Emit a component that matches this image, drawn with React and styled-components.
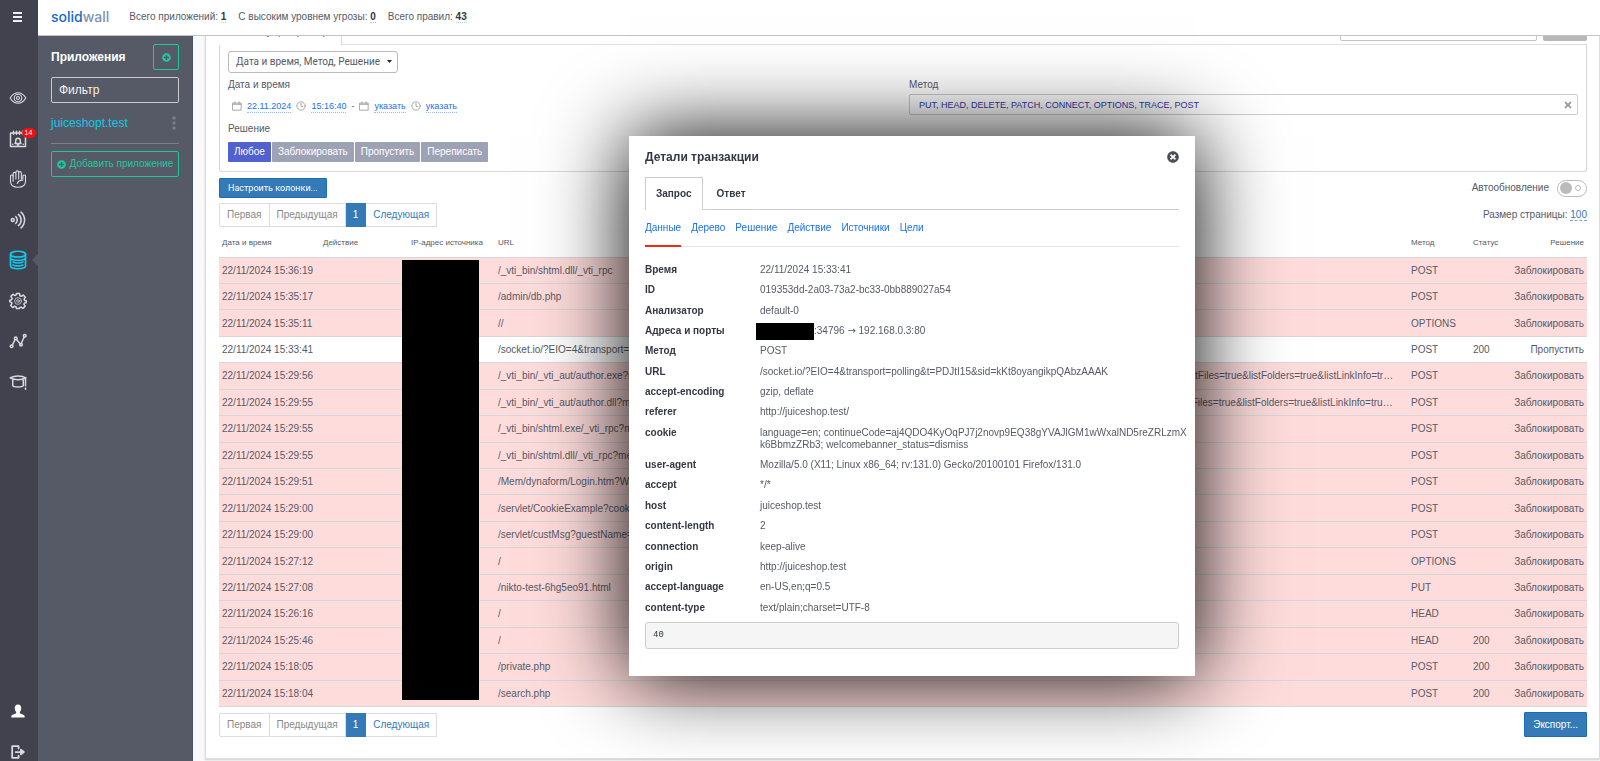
import React,{ useState } from 'react';
import styled,{ createGlobalStyle } from 'styled-components';
import { FaPlusCircle, FaTimesCircle, FaTimes } from 'react-icons/fa';

const CssReset = createGlobalStyle`
    *, *::before, *::after {
        box-sizing:border-box;
    }
    body {
        margin:0;
        background:#f9f9f9;
        color:#555a66;
        font-family:"Liberation Sans", Arial, sans-serif;
        font-size:10px;
        line-height:12px;
    }
    button, input, select {
        font:inherit;
        color:inherit;
        margin:0;
    }
    button {
        cursor:pointer;
    }
    a {
        color:#1a6ff5;
        text-decoration:none;
    }
    svg {
        display:block;
        flex:none;
    }
`
const Shell = styled.div`
    display:flex;
    height:100vh;
    overflow:hidden;
`
const Rail = styled.nav`
    position:relative;
    display:flex;
    flex-direction:column;
    align-items:center;
    flex:none;
    width:38px;
    padding:11px 3px 0 0;
    background:#42424f;
    color:#d9d9de;
`
const RailButton = styled.button`
    position:relative;
    display:flex;
    align-items:center;
    justify-content:center;
    width:24px;
    height:${props => props.$small ? '12px' : '24px'};
    padding:0;
    border:0;
    background:none;
    color:${props => props.$active ? '#12c8e8' : '#d9d9de'};
`
const RailGroup = styled.div`
    display:flex;
    flex-direction:column;
    justify-content:space-between;
    height:${props => props.$height};
    margin-top:${props => props.$bottom ? 'auto' : '63px'};
    margin-bottom:${props => props.$bottom ? '-3px' : '0'};
`
const Badge = styled.span`
    position:absolute;
    top:1px;
    left:16px;
    width:14px;
    height:10px;
    border-radius:5px;
    background:#f01010;
    color:#fff;
    font-size:7px;
    line-height:10px;
    text-align:center;
`
const Notch = styled.span`
    position:absolute;
    top:5px;
    right:-9px;
    border:7px solid transparent;
    border-left:0;
    border-right-color:#555a66;
`
const Page = styled.div`
    display:flex;
    flex-direction:column;
    flex:1;
    min-width:0;
`
const TopBar = styled.header`
    position:relative;
    z-index:1;
    display:flex;
    align-items:center;
    gap:12px;
    flex:none;
    height:36px;
    padding:0 13px 2px;
    background:#fff;
    border-bottom:1px solid #c4c4c4;
`
const Logo = styled.a`
    margin-right:8px;
    color:#1268d3;
    font-family:Inter, sans-serif;
    font-size:14px;
    font-weight:500;
    line-height:16px;
    span {
        color:#7f93ad;
    }
`
const Stat = styled.span`
    b {
        color:#333844;
        border-bottom:1px dotted #b9c8ee;
    }
`
const Columns = styled.div`
    display:flex;
    flex:1;
    min-height:0;
`
const Sidebar = styled.aside`
    flex:none;
    width:155px;
    padding:8px 13px 0 13px;
    background:#555a66;
    border-right:1px solid #4a5269;
`
const SideHead = styled.div`
    display:flex;
    align-items:center;
    justify-content:space-between;
    margin-bottom:7px;
    h2 {
        margin:0;
        color:#fff;
        font-size:12px;
        line-height:16px;
    }
`
const OutlineButton = styled.button`
    display:flex;
    align-items:center;
    justify-content:center;
    gap:4px;
    width:${props => props.$square ? '26px' : '100%'};
    height:26px;
    padding:0;
    border:1px solid #1fc9a0;
    border-radius:2px;
    background:none;
    color:#1fc9a0;
    white-space:nowrap;
`
const FilterInput = styled.input`
    display:block;
    width:100%;
    height:26px;
    padding:0 7px;
    border:1px solid #c9cbd1;
    border-radius:2px;
    background:none;
    color:#fff;
    font-size:12px;
    &::placeholder {
        color:#f2f2f2;
        opacity:1;
    }
`
const AppRow = styled.div`
    display:flex;
    align-items:center;
    justify-content:space-between;
    height:41px;
    margin-bottom:7px;
    padding:0 3px 0 0;
    border-bottom:1px solid #7b808c;
    a {
        color:#12c8e8;
        font-size:12px;
    }
    button {
        padding:0;
        border:0;
        background:none;
        color:#7b808c;
    }
`
const Content = styled.main`
    flex:1;
    min-width:0;
    padding:0 0 2px 12px;
`
const Card = styled.section`
    height:100%;
    padding:0 12px 0 13px;
    background:#fff;
    border:1px solid #dcdcdc;
    border-top:0;
    box-shadow:0 1px 2px #ccc;
`
/* the page is scrolled, only the lower edge of the strip shows under the bar */
const TabStrip = styled.div`
    display:flex;
    align-items:flex-end;
    height:9px;
    overflow:hidden;
`
const StripTab = styled.a`
    width:123px;
    height:30px;
    padding:11px 0 0 32px;
    border-right:1px solid #d8d8d8;
    color:#555a66;
`
const StripSearch = styled.label`
    display:flex;
    align-items:flex-end;
    gap:6px;
    flex:1;
    height:30px;
    justify-content:flex-end;
    border-bottom:1px solid #e0e0e0;
    padding-bottom:3px;
    span {
        margin:0 8px 4px 0;
    }
    input {
        width:197px;
        height:22px;
        border:1px solid #c4c4c4;
        border-radius:2px;
    }
    button {
        width:44px;
        height:22px;
        border:0;
        border-radius:2px;
        background:#b8b8b8;
    }
`
const FilterPanel = styled.div`
    padding:6px 8px 9px;
    border:1px solid #d8d8d8;
    border-top:0;
    border-radius:0 0 3px 3px;
`
const PickWrap = styled.div`
    position:relative;
    width:170px;
    svg {
        position:absolute;
        top:9px;
        right:6px;
    }
`
const Pick = styled.select`
    display:block;
    width:100%;
    height:22px;
    padding:0 7px;
    border:1px solid #bbb;
    border-radius:3px;
    background:#fff;
    appearance:none;
    font-family:Roboto, sans-serif;
    font-size:10px;
`
const FilterGrid = styled.div`
    display:grid;
    grid-template-columns:1fr 1fr;
    gap:12px;
    padding-top:5px;
`
const FieldLabel = styled.div`
    line-height:14px;
    margin-bottom:2px;
`
const DateRow = styled.div`
    display:flex;
    align-items:center;
    gap:5px;
    height:20px;
    margin:4px 0 6px;
    padding-left:4px;
    font-size:9px;
    svg {
        color:#999;
    }
    a {
        border-bottom:1px dotted #9ab8f5;
    }
`
const ButtonGroup = styled.div`
    display:flex;
    gap:1px;
    margin-top:6px;
`
const GroupButton = styled.button`
    height:20px;
    padding:0 6px;
    border:0;
    border-radius:1px;
    background:${props => props.$active ? '#5161cf' : '#9ea2b5'};
    color:#fff;
`
const TagBox = styled.div`
    display:flex;
    align-items:center;
    height:21px;
    padding:0 4px 0 9px;
    border:1px solid #ccc;
    border-radius:2px;
    input {
        flex:1;
        min-width:0;
        padding:0;
        border:0;
        outline:0;
        background:none;
        color:#3238a8;
        font-size:9px;
    }
    button {
        padding:0;
        border:0;
        background:none;
        color:#999;
    }
`
const Line = styled.div`
    display:flex;
    align-items:center;
    justify-content:space-between;
    padding-top:${props => props.$top};
`
const BlueButton = styled.button`
    height:${props => props.$tall ? '25px' : '20px'};
    padding:0 8px;
    border:1px solid #1a6cb4;
    border-radius:1px;
    background:#337ab7;
    color:#fff;
    ${props => props.$narrow && 'font-family:Roboto, sans-serif; font-size:9px;'}
`
const Toggle = styled.label`
    display:flex;
    align-items:center;
    gap:8px;
    input {
        display:grid;
        grid-template-columns:12px 12px;
        align-items:center;
        justify-items:center;
        width:30px;
        height:17px;
        margin:0;
        padding:0 2px;
        appearance:none;
        border:1px solid #bbb;
        border-radius:9px;
        background:#fff;
    }
    input::before {
        content:'';
        width:12px;
        height:12px;
        border-radius:50%;
        background:#bbb;
    }
    input::after {
        content:'';
        width:6px;
        height:6px;
        border:1px solid #bbb;
        border-radius:50%;
    }
`
const PageSize = styled.span`
    a {
        color:#337ab7;
        border-bottom:1px dashed #7aa5d0;
    }
`
const PagerBox = styled.div`
    display:flex;
    button {
        height:24px;
        padding:0 7px;
        border:1px solid #ddd;
        border-left:0;
        background:#fff;
        color:#337ab7;
    }
    button:first-child {
        border-left:1px solid #ddd;
        border-radius:2px 0 0 2px;
    }
    button:disabled {
        color:#888;
    }
    button.current {
        border-color:#337ab7;
        background:#337ab7;
        color:#fff;
    }
`
const TableWrap = styled.div`
    position:relative;
`
const Table = styled.table`
    width:100%;
    height:480px;
    table-layout:fixed;
    border-collapse:collapse;
    th, td {
        padding:1px 3px 0;
        overflow:hidden;
        border-bottom:1px solid #d5d8d8;
        text-align:left;
        text-overflow:ellipsis;
        white-space:nowrap;
    }
    td:nth-child(4) {
        padding-right:12px;
    }
    th {
        height:30px;
        padding-top:3px;
        font-size:8px;
        font-weight:normal;
    }
    th:last-child, td:last-child {
        text-align:right;
    }
    col.date {
        width:101px;
    }
    col.action {
        width:88px;
    }
    col.ip {
        width:87px;
    }
    col.method {
        width:62px;
    }
    col.status {
        width:36px;
    }
    col.decision {
        width:81px;
    }
`
const Tr = styled.tr`
    background:${props => props.$blocked ? '#ffdcdc' : '#fff'};
`
const Redacted = styled.div`
    position:absolute;
    top:33px;
    bottom:7px;
    left:183px;
    width:77px;
    background:#000;
`
const Modal = styled.div`
    position:fixed;
    z-index:2;
    top:136px;
    left:calc(57% - 283px);
    width:566px;
    padding:12px 16px 27px;
    background:#fff;
    box-shadow:0 0 80px #000;
`
const ModalHead = styled.div`
    display:flex;
    align-items:center;
    justify-content:space-between;
    h3 {
        margin:0;
        color:#333844;
        font-size:12px;
        line-height:18px;
    }
    button {
        padding:0;
        border:0;
        background:none;
        color:#4a4f5a;
    }
`
const ModalTabs = styled.div`
    display:flex;
    gap:3px;
    margin-top:11px;
    border-bottom:1px solid #ccc;
`
const ModalTab = styled.button`
    height:33px;
    margin-bottom:-1px;
    padding:0 10px;
    border:1px solid ${props => props.$active ? '#ccc' : 'transparent'};
    border-bottom-color:${props => props.$active ? '#fff' : '#ccc'};
    background:#fff;
    color:#333844;
    font-weight:bold;
`
const SubTabs = styled.div`
    display:flex;
    gap:10px;
    border-bottom:1px solid #e4e4e4;
`
const SubTab = styled.a`
    height:37px;
    margin-bottom:-1px;
    padding-top:12px;
    border-bottom:2px solid ${props => props.$active ? '#ee2c10' : 'transparent'};
`
const Details = styled.dl`
    display:grid;
    grid-template-columns:115px 1fr;
    height:358px;
    margin:13px 0 4px;
    dt {
        padding-top:4px;
        color:#333844;
        font-weight:bold;
    }
    dd {
        margin:0 -10px 0 0;
        padding:4px 0;
        word-break:break-all;
    }
    i {
        display:inline-block;
        width:58px;
        height:17px;
        margin:-3px 0 -3px -4px;
        background:#000;
        vertical-align:middle;
    }
    b {
        font-family:"DejaVu Sans", sans-serif;
        font-weight:normal;
        line-height:1;
    }
`
const Body = styled.pre`
    height:27px;
    margin:0;
    padding:0 7px;
    border:1px solid #ccc;
    border-radius:3px;
    background:#f5f5f5;
    color:#333844;
    font-family:"Liberation Mono", monospace;
    font-size:9px;
    line-height:25px;
`

const Icon = ({ size = 18, children, width = 1.5 }) => (
    <svg width={size} height={size} viewBox="0 0 24 24" fill="none" stroke="currentColor" strokeWidth={width} strokeLinecap="round" strokeLinejoin="round">
        {children}
    </svg>
)
const icons = {
    eye: <Icon><path d="M1.5 12C5 6.500 9 5 12 5s7 1.500 10.500 7C19 17.500 15 19 12 19S5 17.500 1.500 12z"/><circle cx="12" cy="12" r="5"/><circle cx="12" cy="12" r="2"/></Icon>,
    events: <Icon width={2}><path d="M2 4h20v18H2zM6 1.500v4M10 1.500v4M14 1.500v4M18 1.500v4"/><path d="M8 18c1-1 1-2 1-4a3 3 0 0 1 6 0c0 2 0 3 1 4zM11 20h2M5 19v.1M19 19v.1"/></Icon>,
    hand: <Icon><path d="M5.500 15V8a1.800 1.800 0 0 0-3.500 0v7c0 5 4 8 10 8s10-3 10-8V8a1.800 1.800 0 0 0-3.500 0v4"/><path d="M5.500 8V5a1.800 1.800 0 0 1 3.700 0v7M9.200 11V3a1.800 1.800 0 0 1 3.700 0v9M12.900 11V4a1.800 1.800 0 0 1 3.600 0v8M11 18c1-3 4-4.500 7.500-4.500"/></Icon>,
    waves: <Icon width={2}><circle cx="5" cy="12" r="2"/><path d="M9 7.500a6 6 0 0 1 0 9M12.500 4.500a9.500 9.500 0 0 1 0 15M16 1.500a14 14 0 0 1 0 21"/></Icon>,
    db: <Icon size={20} width={2}><ellipse cx="12" cy="5" rx="9" ry="3.500"/><path d="M3 5v14c0 2 4 3.500 9 3.500s9-1.500 9-3.500V5M3 9c0 2 4 3.500 9 3.500S21 11 21 9M6 14.500c3 1.500 9 1.500 12 0M6 18c3 1.500 9 1.500 12 0"/></Icon>,
    gear: <Icon width={2}><path d="M10 2h4l.6 3 1.800.8 2.600-1.700 2.800 2.800-1.700 2.600.8 1.800 2.600.7v2l-3 .8-.7 1.500 1.700 2.700-2.800 2.800-2.600-1.700-1.500.6L14 22h-4l-.7-2.400-1.600-.6L5 20.700 2.300 18 4 15.300l-.7-1.500L1 13v-2l2.500-.6.700-1.900L2.500 5.800 5.300 3 8 4.800l1.400-.6z"/><circle cx="12" cy="12" r="4.500" strokeWidth="1"/><circle cx="12" cy="12" r="1.800" strokeWidth="1"/></Icon>,
    chart: <Icon width={2}><path d="M4.500 17.500 8 10M10 10l5 6M16.500 15 20 7"/><circle cx="3.500" cy="19" r="1.800"/><circle cx="9" cy="8.500" r="1.800"/><circle cx="16" cy="17" r="1.800"/><circle cx="21" cy="5" r="1.800"/></Icon>,
    study: <Icon width={2}><path d="M1.500 6.500C5 4.500 9 4 12 4s7 .5 10.500 2.500C19 8.500 15 9 12 9S5 8.500 1.500 6.500zM5 9v8c1 2 13 2 14 0V9M22 7v10M22 20v1.500"/></Icon>,
}
const CalendarIcon = () => (
    <Icon size={10} width={2}><path d="M2 5h20v17H2zM2 8h20M7 2v4M17 2v4"/></Icon>
)
const ClockIcon = () => (
    <Icon size={10} width={2}><circle cx="12" cy="12" r="10"/><path d="M12 6v7h4"/></Icon>
)

const railList = ['eye','events','hand','waves','db','gear','chart','study']
const block = 'Заблокировать'
const authorArgs = '?method=list+documents%3a3%2e0%2e2&service%5fname=&listHiddenDocs=true&listExplorerDocs=true&listRecurse=false&listFiles=true&listFolders=true&listLinkInfo=true&listIncludeParent=true'
const rows = [
    ['22/11/2024 15:36:19','/_vti_bin/shtml.dll/_vti_rpc','POST','',block],
    ['22/11/2024 15:35:17','/admin/db.php','POST','',block],
    ['22/11/2024 15:35:11','//','OPTIONS','',block],
    ['22/11/2024 15:33:41','/socket.io/?EIO=4&transport=polling&t=PDJtI15','POST','200','Пропустить'],
    ['22/11/2024 15:29:56','/_vti_bin/_vti_aut/author.exe' + authorArgs,'POST','',block],
    ['22/11/2024 15:29:55','/_vti_bin/_vti_aut/author.dll' + authorArgs,'POST','',block],
    ['22/11/2024 15:29:55','/_vti_bin/shtml.exe/_vti_rpc?method=server+version','POST','',block],
    ['22/11/2024 15:29:55','/_vti_bin/shtml.dll/_vti_rpc?method=server+version','POST','',block],
    ['22/11/2024 15:29:51','/Mem/dynaform/Login.htm?WINDWEB_URL=%2FMem','POST','',block],
    ['22/11/2024 15:29:00','/servlet/CookieExample?cookiename=test','POST','',block],
    ['22/11/2024 15:29:00','/servlet/custMsg?guestName=<script>','POST','',block],
    ['22/11/2024 15:27:12','/','OPTIONS','',block],
    ['22/11/2024 15:27:08','/nikto-test-6hg5eo91.html','PUT','',block],
    ['22/11/2024 15:26:16','/','HEAD','',block],
    ['22/11/2024 15:25:46','/','HEAD','200',block],
    ['22/11/2024 15:18:05','/private.php','POST','200',block],
    ['22/11/2024 15:18:04','/search.php','POST','200',block],
]
const details = [
    ['Время','22/11/2024 15:33:41'],
    ['ID','019353dd-2a03-73a2-bc33-0bb889027a54'],
    ['Анализатор','default-0'],
    ['Адреса и порты',<><i />:34796 <b>→</b> 192.168.0.3:80</>],
    ['Метод','POST'],
    ['URL','/socket.io/?EIO=4&transport=polling&t=PDJtI15&sid=kKt8oyangikpQAbzAAAK'],
    ['accept-encoding','gzip, deflate'],
    ['referer','http://juiceshop.test/'],
    ['cookie','language=en; continueCode=aj4QDO4KyOqPJ7j2novp9EQ38gYVAJlGM1wWxalND5reZRLzmXk6BbmzZRb3; welcomebanner_status=dismiss'],
    ['user-agent','Mozilla/5.0 (X11; Linux x86_64; rv:131.0) Gecko/20100101 Firefox/131.0'],
    ['accept','*/*'],
    ['host','juiceshop.test'],
    ['content-length','2'],
    ['connection','keep-alive'],
    ['origin','http://juiceshop.test'],
    ['accept-language','en-US,en;q=0.5'],
    ['content-type','text/plain;charset=UTF-8'],
]

const Pager = () => (
    <PagerBox>
        <button disabled>Первая</button>
        <button disabled>Предыдущая</button>
        <button className="current">1</button>
        <button>Следующая</button>
    </PagerBox>
)
const Transaction = ({ onClose }) => {
    const [ tab, setTab ] = useState('Запрос')
    const [ sub, setSub ] = useState('Данные')
    return (
        <Modal role="dialog" aria-label="Детали транзакции">
            <ModalHead>
                <h3>Детали транзакции</h3>
                <button aria-label="Закрыть" onClick={onClose}><FaTimesCircle size={12} /></button>
            </ModalHead>
            <ModalTabs>
                {['Запрос','Ответ'].map((name)=>(
                    <ModalTab key={name} $active={tab === name} onClick={()=>{setTab(name)}}>{name}</ModalTab>
                ))}
            </ModalTabs>
            <SubTabs>
                {['Данные','Дерево','Решение','Действие','Источники','Цели'].map((name)=>(
                    <SubTab key={name} href="#" $active={sub === name} onClick={()=>{setSub(name)}}>{name}</SubTab>
                ))}
            </SubTabs>
            <Details>
                {details.map(([name,value])=>(
                    <React.Fragment key={name}>
                        <dt>{name}</dt>
                        <dd>{value}</dd>
                    </React.Fragment>
                ))}
            </Details>
            <Body>40</Body>
        </Modal>
    )
}
const App = () => {
    const [ open, setOpen ] = useState(true)
    const [ decision, setDecision ] = useState('Любое')
    return (
        <>
        <CssReset />
        <Shell>
            <Rail>
                <RailButton $small aria-label="Меню">
                    <svg width="9" height="10" viewBox="0 0 9 10" fill="#f0f0f2"><path d="M0 0h9v2H0zM0 4h9v2H0zM0 8h9v2H0z"/></svg>
                </RailButton>
                <RailGroup $height="308px">
                    {railList.map((name)=>(
                        <RailButton key={name} aria-label={name} $active={name === 'db'}>
                            {icons[name]}
                            {name === 'events' && <Badge>14</Badge>}
                            {name === 'db' && <Notch />}
                        </RailButton>
                    ))}
                </RailGroup>
                <RailGroup $bottom $height="65px">
                    <RailButton aria-label="Профиль">
                        <svg width="14" height="14" viewBox="0 0 24 24" fill="#fff"><path d="M12 1c4 0 6 3 5.500 7-.3 3-1.500 4.500-2.500 6v2l7 3c1 .5 1.500 1.500 1.500 4H.5c0-2.500.5-3.500 1.500-4l7-3v-2c-1-1.500-2.200-3-2.500-6C6 4 8 1 12 1z"/></svg>
                    </RailButton>
                    <RailButton aria-label="Выход">
                        <Icon size={14} width={3}><path d="M13 2H2v20h11M13 2v4M13 18v4M8 12h13"/><path d="m17 8 5 4-5 4z" fill="currentColor"/></Icon>
                    </RailButton>
                </RailGroup>
            </Rail>
            <Page>
                <TopBar>
                    <Logo href="#">solid<span>wall</span></Logo>
                    <Stat>Всего приложений: <b>1</b></Stat>
                    <Stat>С высоким уровнем угрозы: <b>0</b></Stat>
                    <Stat>Всего правил: <b>43</b></Stat>
                </TopBar>
                <Columns>
                    <Sidebar>
                        <SideHead>
                            <h2>Приложения</h2>
                            <OutlineButton $square aria-label="Добавить"><FaPlusCircle size={9} /></OutlineButton>
                        </SideHead>
                        <FilterInput placeholder="Фильтр" aria-label="Фильтр" />
                        <AppRow>
                            <a href="#">juiceshopt.test</a>
                            <button aria-label="Действия">
                                <svg width="4" height="14" viewBox="0 0 4 14" fill="currentColor"><circle cx="2" cy="2" r="1.700"/><circle cx="2" cy="7" r="1.700"/><circle cx="2" cy="12" r="1.700"/></svg>
                            </button>
                        </AppRow>
                        <OutlineButton><FaPlusCircle size={9} />Добавить приложение</OutlineButton>
                    </Sidebar>
                    <Content>
                        <Card>
                            <TabStrip>
                                <StripTab href="#">Текущий фильтр</StripTab>
                                <StripSearch>
                                    <span>Найти транзакцию по номеру:</span>
                                    <input type="text" />
                                    <button aria-label="Найти" />
                                </StripSearch>
                            </TabStrip>
                            <FilterPanel>
                                <PickWrap>
                                    <Pick aria-label="Поля фильтра">
                                        <option>Дата и время, Метод, Решение</option>
                                    </Pick>
                                    <svg width="5" height="4" viewBox="0 0 5 4"><path d="M0 0h5L2.500 3z" fill="#222"/></svg>
                                </PickWrap>
                                <FilterGrid>
                                    <div>
                                        <FieldLabel>Дата и время</FieldLabel>
                                        <DateRow>
                                            <CalendarIcon /><a href="#">22.11.2024</a>
                                            <ClockIcon /><a href="#">15:16:40</a>
                                            <span>-</span>
                                            <CalendarIcon /><a href="#">указать</a>
                                            <ClockIcon /><a href="#">указать</a>
                                        </DateRow>
                                        <FieldLabel>Решение</FieldLabel>
                                        <ButtonGroup>
                                            {['Любое','Заблокировать','Пропустить','Переписать'].map((name)=>(
                                                <GroupButton key={name} $active={decision === name} onClick={()=>{setDecision(name)}}>{name}</GroupButton>
                                            ))}
                                        </ButtonGroup>
                                    </div>
                                    <div>
                                        <FieldLabel>Метод</FieldLabel>
                                        <TagBox>
                                            <input aria-label="Метод" defaultValue="PUT, HEAD, DELETE, PATCH, CONNECT, OPTIONS, TRACE, POST" />
                                            <button aria-label="Очистить"><FaTimes size={10} /></button>
                                        </TagBox>
                                    </div>
                                </FilterGrid>
                            </FilterPanel>
                            <Line $top="6px">
                                <BlueButton $narrow>Настроить колонки...</BlueButton>
                                <Toggle>Автообновление<input type="checkbox" /></Toggle>
                            </Line>
                            <Line $top="5px">
                                <Pager />
                                <PageSize>Размер страницы: <a href="#">100</a></PageSize>
                            </Line>
                            <TableWrap>
                                <Table>
                                    <colgroup>
                                        <col className="date" /><col className="action" /><col className="ip" /><col />
                                        <col className="method" /><col className="status" /><col className="decision" />
                                    </colgroup>
                                    <thead>
                                        <tr>
                                            <th>Дата и время</th><th>Действие</th><th>IP-адрес источника</th><th>URL</th>
                                            <th>Метод</th><th>Статус</th><th>Решение</th>
                                        </tr>
                                    </thead>
                                    <tbody>
                                        {rows.map(([date,url,method,status,result],index)=>(
                                            <Tr key={index} $blocked={result === block}>
                                                <td>{date}</td><td></td><td></td><td>{url}</td>
                                                <td>{method}</td><td>{status}</td><td>{result}</td>
                                            </Tr>
                                        ))}
                                    </tbody>
                                </Table>
                                <Redacted />
                            </TableWrap>
                            <Line $top="5px">
                                <Pager />
                                <BlueButton $tall>Экспорт...</BlueButton>
                            </Line>
                        </Card>
                    </Content>
                </Columns>
            </Page>
        </Shell>
        {open && <Transaction onClose={()=>{setOpen(false)}} />}
        </>
    )
}
export default App;
